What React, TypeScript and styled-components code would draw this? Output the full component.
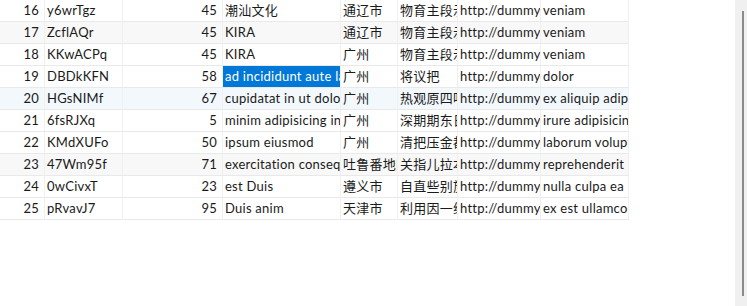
import React from 'react'
import styled, { createGlobalStyle, css } from 'styled-components'

const GlobalStyle = createGlobalStyle`
  html, body {
    margin: 0;
    padding: 0;
    background: #ffffff;
  }
  body {
    font-family: "Segoe UI", Lato, "Noto Sans CJK SC", sans-serif;
  }
`

const columns = '45px 78px 100px 118px 57px 60px 83px 88px'

const Page = styled.div`
  display: flex;
  height: 306px;
  width: 747px;
  overflow: hidden;
`

const Grid = styled.div`
  flex: 1;
  display: flex;
  flex-direction: column;
  align-items: flex-start;
`

type RowTone = 'plain' | 'stripe' | 'hover'

const toneBg: Record<RowTone, string> = {
  plain: '#ffffff',
  stripe: '#f8f8f8',
  hover: '#f3f8fd',
}

const Row = styled.div<{ $tone: RowTone }>`
  display: grid;
  grid-template-columns: ${columns};
  height: 22px;
  background: ${p => toneBg[p.$tone]};
`

const Cell = styled.div<{ $align?: 'left' | 'right'; $selected?: boolean }>`
  box-sizing: border-box;
  height: 22px;
  border-right: 1px solid #f0f0f0;
  border-bottom: 1px solid #e9e9e9;
  padding: 0 2px;
  font-size: 13px;
  letter-spacing: 0.25px;
  line-height: 21px;
  color: #1a1a1a;
  white-space: nowrap;
  overflow: hidden;
  text-overflow: clip;
  text-align: ${p => (p.$align === 'right' ? 'right' : 'left')};
  ${p => p.$align === 'right' && css`padding-right: 5px;`}
  ${p => p.$selected && css`
    background: #0078d7;
    color: #ffffff;
  `}
`

const ScrollTrack = styled.div`
  width: 12px;
  height: 306px;
  background: #f0f0f0;
  display: flex;
  justify-content: center;
  padding: 11px 0 10px;
  box-sizing: border-box;
`

const ScrollThumb = styled.div`
  width: 2px;
  margin-left: 3px;
  height: 100%;
  background: #8b8b8b;
`

type Item = {
  no: number
  code: string
  score: number
  title: string
  city: string
  addr: string
  url: string
  note: string
  tone: RowTone
  selected?: boolean
}

const rows: Item[] = [
  { no: 16, code: 'y6wrTgz', score: 45, title: '潮汕文化', city: '通辽市', addr: '物育主段示程', url: 'http://dummyimage.com/400x400', note: 'veniam', tone: 'plain' },
  { no: 17, code: 'ZcflAQr', score: 45, title: 'KIRA', city: '通辽市', addr: '物育主段示程', url: 'http://dummyimage.com/400x400', note: 'veniam', tone: 'stripe' },
  { no: 18, code: 'KKwACPq', score: 45, title: 'KIRA', city: '广州', addr: '物育主段示程', url: 'http://dummyimage.com/400x400', note: 'veniam', tone: 'plain' },
  { no: 19, code: 'DBDkKFN', score: 58, title: 'ad incididunt aute labore', city: '广州', addr: '将议把', url: 'http://dummyimage.com/400x400', note: 'dolor', tone: 'plain', selected: true },
  { no: 20, code: 'HGsNIMf', score: 67, title: 'cupidatat in ut dolore', city: '广州', addr: '热观原四听', url: 'http://dummyimage.com/400x400', note: 'ex aliquip adipisicing', tone: 'hover' },
  { no: 21, code: '6fsRJXq', score: 5, title: 'minim adipisicing in', city: '广州', addr: '深期期东日', url: 'http://dummyimage.com/400x400', note: 'irure adipisicing', tone: 'plain' },
  { no: 22, code: 'KMdXUFo', score: 50, title: 'ipsum eiusmod', city: '广州', addr: '清把压金都', url: 'http://dummyimage.com/400x400', note: 'laborum voluptate', tone: 'plain' },
  { no: 23, code: '47Wm95f', score: 71, title: 'exercitation consequat', city: '吐鲁番地区', addr: '关指儿拉本', url: 'http://dummyimage.com/400x400', note: 'reprehenderit', tone: 'stripe' },
  { no: 24, code: '0wCivxT', score: 23, title: 'est Duis', city: '遵义市', addr: '自直些别族', url: 'http://dummyimage.com/400x400', note: 'nulla culpa ea', tone: 'plain' },
  { no: 25, code: 'pRvavJ7', score: 95, title: 'Duis anim', city: '天津市', addr: '利用因一线', url: 'http://dummyimage.com/400x400', note: 'ex est ullamco', tone: 'plain' },
]

export default function App() {
  return (
    <>
      <GlobalStyle />
      <Page>
        <Grid>
          {rows.map(r => (
            <Row key={r.no} $tone={r.tone}>
              <Cell $align="right">{r.no}</Cell>
              <Cell>{r.code}</Cell>
              <Cell $align="right">{r.score}</Cell>
              <Cell $selected={r.selected}>{r.title}</Cell>
              <Cell>{r.city}</Cell>
              <Cell>{r.addr}</Cell>
              <Cell>{r.url}</Cell>
              <Cell>{r.note}</Cell>
            </Row>
          ))}
        </Grid>
        <ScrollTrack>
          <ScrollThumb />
        </ScrollTrack>
      </Page>
    </>
  )
}
